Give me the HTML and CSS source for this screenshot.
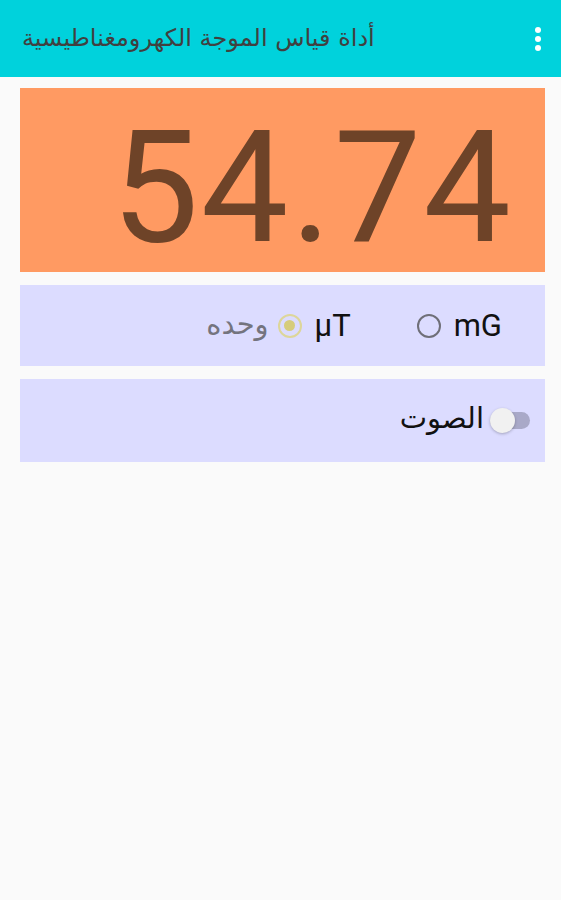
FILE: index.html
```html
<!DOCTYPE html>
<html lang="ar">
<head>
    <meta charset="UTF-8">
    <meta name="viewport" content="width=device-width, initial-scale=1.0">
    <title>أداة قياس الموجة الكهرومغناطيسية</title>
    <link rel="stylesheet" href="styles.css">
</head>
<body>
    <header class="toolbar">
        <h1 class="title">أداة قياس الموجة الكهرومغناطيسية</h1>
        <div class="menu" aria-label="menu">
            <span></span><span></span><span></span>
        </div>
    </header>

    <main class="content">
        <div class="reading">54.74</div>

        <div class="card units">
            <span class="unit-label">وحده</span>
            <label class="radio checked">
                <span class="dot"></span>
                <span class="radio-text">µT</span>
            </label>
            <label class="radio">
                <span class="dot"></span>
                <span class="radio-text">mG</span>
            </label>
        </div>

        <div class="card sound">
            <span class="sound-label">الصوت</span>
            <span class="switch"><span class="thumb"></span></span>
        </div>
    </main>
</body>
</html>
```

FILE: styles.css
```css
:root {
    --teal: #00d2dc;
    --orange: #ff9a62;
    --brown: #6e4328;
    --lavender: #dcdcff;
    --bg: #fafafa;
}

body {
    margin: 0;
    background: var(--bg);
    font-family: "DejaVu Sans", "Noto Sans", sans-serif;
    color: #222;
}

.toolbar {
    height: 77px;
    background: var(--teal);
    display: flex;
    align-items: center;
    justify-content: space-between;
    padding: 0 20px 0 22px;
    box-sizing: border-box;
}

.title {
    margin: 0;
    font-size: 24px;
    font-weight: normal;
    color: #404040;
    padding-bottom: 2px;
}

.menu {
    display: flex;
    flex-direction: column;
    gap: 3px;
}

.menu span {
    width: 6px;
    height: 6px;
    border-radius: 50%;
    background: #fff;
}

.content {
    padding: 11px 16px 0 20px;
    display: flex;
    flex-direction: column;
    gap: 13px;
}

.reading {
    height: 184px;
    box-sizing: border-box;
    padding-top: 15px;
    background: var(--orange);
    color: var(--brown);
    font-family: Roboto, "Liberation Sans", sans-serif;
    font-size: 156px;
    line-height: 169px;
    text-align: right;
    padding-right: 32px;
    letter-spacing: 2px;
}

.card {
    background: var(--lavender);
    display: flex;
    align-items: center;
    justify-content: flex-end;
}

.units {
    height: 81px;
    padding-right: 43px;
}

.unit-label {
    font-size: 29px;
    color: #74747e;
    margin-right: 9px;
    padding-bottom: 4px;
}

.radio {
    display: flex;
    align-items: center;
    gap: 13px;
}

.radio + .radio {
    margin-left: 66px;
}

.radio-text {
    font-family: Roboto, "Liberation Sans", sans-serif;
    font-size: 31px;
    color: #111;
}

.dot {
    width: 20px;
    height: 20px;
    border: 2px solid #6f6f78;
    border-radius: 50%;
    box-sizing: content-box;
    display: flex;
    align-items: center;
    justify-content: center;
}

.checked .dot {
    border-color: #ddd69a;
}

.checked .dot::after {
    content: "";
    width: 11px;
    height: 11px;
    border-radius: 50%;
    background: #d6cc7c;
}

.sound {
    height: 83px;
    padding-right: 15px;
    gap: 6px;
}

.sound-label {
    font-size: 29px;
    color: #111;
    padding-bottom: 6px;
}

.switch {
    width: 40px;
    height: 17px;
    border-radius: 9px;
    background: #a9a9c8;
    display: flex;
    align-items: center;
}

.thumb {
    width: 25px;
    height: 25px;
    border-radius: 50%;
    background: #f1f1f1;
    box-shadow: 0 1px 3px rgba(0, 0, 0, 0.25);
}
```
